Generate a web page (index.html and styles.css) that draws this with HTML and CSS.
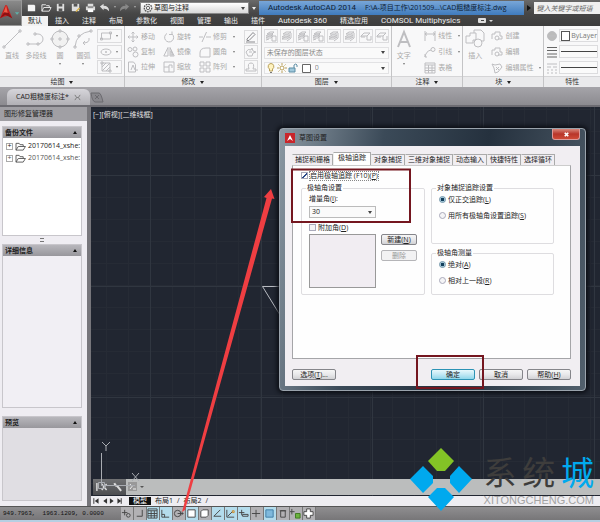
FILE: index.html
```html
<!DOCTYPE html>
<html lang="zh-CN">
  <head>
    <meta charset="UTF-8" />
    <meta name="viewport" content="width=device-width, initial-scale=1.0" />
    <title>Autodesk AutoCAD 2014</title>
    <link rel="stylesheet" href="styles.css" />
  </head>
  <body>
    <svg class="sprite" aria-hidden="true">
      <symbol id="move" viewBox="0 0 12 12"><path d="M6 1v10M1 6h10M4.500 2.500L6 1l1.500 1.500M4.500 9.500L6 11l1.500-1.500M2.500 4.500L1 6l1.500 1.500M9.500 4.500L11 6 9.500 7.500" /></symbol>
      <symbol id="rotate" viewBox="0 0 12 12"><path d="M4 2.500a4.500 4.500 0 1 0 5 .5M9 .5V3.500H6" /></symbol>
      <symbol id="trim" viewBox="0 0 12 12"><path d="M0 6h4M7 6h5M3 11L7.500 1" /></symbol>
      <symbol id="copy" viewBox="0 0 12 12"><circle cx="3" cy="3.500" r="2" /><circle cx="8" cy="3" r="2" /><circle cx="8.500" cy="8.500" r="2.500" /></symbol>
      <symbol id="mirror" viewBox="0 0 12 12"><path d="M5 1.500V10H.8zM7 1.500V10h4.200z" /><path d="M8 5v4h2z" /></symbol>
      <symbol id="fillet" viewBox="0 0 12 12"><path d="M1 11V7q0-5 6-5h4v9z" /></symbol>
      <symbol id="stretch" viewBox="0 0 12 12"><path d="M1.500 1h5l2 2.500V11h-7zM4 9l2-5 2 5M8 9h3" /></symbol>
      <symbol id="scale" viewBox="0 0 12 12"><path d="M1 1h10v10H1zM1 6h5v5M6 6V4h3v3" /></symbol>
      <symbol id="array" viewBox="0 0 12 12"><path d="M1 1h4v4H1zM7 1h4v4H7zM1 7h4v4H1zM7 7h4v4H7z" /></symbol>
      <symbol id="pencil" viewBox="0 0 12 12"><path d="M2 8l6-6.500 2 2L4 9.500H2zM1 11h9" stroke="#8a8a8e" /></symbol>
      <symbol id="explode" viewBox="0 0 12 12"><path d="M1 6q2-4 5-2l1-2 1 3 3 1-3 1-1 3H3zM4 6h3" /></symbol>
      <symbol id="offset" viewBox="0 0 12 12"><path d="M1 10h10V8H8q2-6-2-6T4 8H1z" /></symbol>
      <symbol id="rect" viewBox="0 0 12 12"><path d="M1.500 3h9v6h-9zM.5 8h2v2h-2zM9.500 2h2v2h-2z" /></symbol>
      <symbol id="ellipse" viewBox="0 0 12 12"><ellipse cx="6" cy="6" rx="5" ry="3" /><path d="M6 5v2M5 6h2" /></symbol>
      <symbol id="hatch" viewBox="0 0 12 12"><path d="M2 2h8v8H2zM2 6l4-4M2 10l8-8M6 10l4-4M1 1h2v2H1zM9 9h2v2H9z" /></symbol>
      <symbol id="layers" viewBox="0 0 12 12"><path d="M1 8l3-2h4L6 8zM1 6l3-2h4L6 6zM2 4l3-2h4L7 4zM1 10l3-1M7 6h4v5H7z" /></symbol>
      <symbol id="layer2" viewBox="0 0 12 12"><path d="M1 9l3-2h5L6 9zM1 7l3-2h5L6 7zM2 4l3-2h5L7 4zM10 3v5M6 11l4-3" /></symbol>
      <symbol id="layer3" viewBox="0 0 12 12"><path d="M1 6l3-3h6L7 6zM7 6v4h4V6M1 6v1h4" /></symbol>
      <symbol id="linear" viewBox="0 0 12 12"><path d="M1 1v10M11 1v10M1 4h10M3 2.500L1 4l2 1.500M9 2.500L11 4 9 5.500" /></symbol>
      <symbol id="leader" viewBox="0 0 12 12"><circle cx="9" cy="3.500" r="2" /><path d="M1 11q1-6 6-7M1 8v3h2" /></symbol>
      <symbol id="table" viewBox="0 0 12 12"><path d="M1 1h10v10H1zM1 3h10M1 6h10M1 8.500h10M4.500 3v8M8 3v8" /></symbol>
      <symbol id="block" viewBox="0 0 12 12"><path d="M1 9V4h3V2h5v4h2v3H7" /><circle cx="6" cy="8" r="2" /></symbol>
      <symbol id="tag" viewBox="0 0 12 12"><path d="M1 2l3 1 5-1 2 3-4 5-3 1-1-5zM5 5l3 3M8 5L5 8" /></symbol>
      <symbol id="folder" viewBox="0 0 12 10"><path d="M1 9V1.500h3.500L5.500 3H9v2M1 9l2.500-4H11.500L9 9z" /></symbol>
    </svg>

    <div class="app">
      <header class="top">
        <button class="app-logo" aria-label="AutoCAD">
          <svg viewBox="0 0 24 24"><path d="M0 18L6 3h2l6 15-4-3-5 1z" fill="#c31d1d" /><path d="M7 3l-3 9 5 1z" fill="#f05b45" /><path d="M0 18l6-4 8 4-4-6-5-1z" fill="#8c1013" /><path d="M17 11h5l-2.500 3z" fill="#5fb0a8" /></svg>
        </button>
        <div class="top__rows">
          <div class="titlebar">
            <div class="quick">
              <button aria-label="新建"><svg viewBox="0 0 12 12"><path d="M2 3h7l1 1v6H2z" fill="#f4f4f4" /></svg></button>
              <button aria-label="打开"><svg viewBox="0 0 12 12"><path d="M1 10V3h4l1 1h3v2M1 10l2-4h8l-2 4z" fill="none" stroke="#eee" /></svg></button>
              <button aria-label="保存"><svg viewBox="0 0 12 12"><path d="M2 2h8v8H2z" fill="#ddd" /><path d="M4 2h4v3H4zM4 7h4v3H4z" fill="#555" /></svg></button>
              <button aria-label="另存为"><svg viewBox="0 0 12 12"><path d="M2 2h8v8H2z" fill="#ddd" /><path d="M4 2h4v3H4z" fill="#555" /><path d="M6 10l4-4 1 1-4 4z" fill="#d9b040" /></svg></button>
              <button aria-label="打印"><svg viewBox="0 0 12 12"><path d="M3 2h6v3h2v4H1V5h2z" fill="#ddd" /><path d="M3 5h6v1H3z" fill="#444" /><path d="M3 8h6v3H3z" fill="#fff" /></svg></button>
              <button aria-label="放弃"><svg viewBox="0 0 12 12"><path d="M1 5l4-3v2q6 0 6 6-2-3-6-3v2z" fill="#ddd" /></svg></button>
              <i class="caret caret--light"></i>
              <button aria-label="重做"><svg viewBox="0 0 12 12"><path d="M11 5L7 2v2Q1 4 1 10q2-3 6-3v2z" fill="#888" /></svg></button>
              <i class="caret caret--light"></i>
            </div>
            <div class="combo combo--workspace">
              <svg viewBox="0 0 12 12"><circle cx="6" cy="6" r="4.500" fill="none" stroke="#555" stroke-width="1.500" stroke-dasharray="2 1" /><circle cx="6" cy="6" r="2" fill="none" stroke="#555" /></svg>
              <select aria-label="工作空间"><option>草图与注释</option></select>
            </div>
            <button class="quick-more" aria-label="自定义"><i class="caret"></i></button>
            <div class="window-title"><span>Autodesk AutoCAD 2014</span><span class="window-title__path">F:\A-项目工作\201509...\CAD粗糙度标注.dwg</span></div>
            <i class="play"></i>
            <input class="search" type="text" aria-label="搜索" placeholder="键入关键字或短语" />
          </div>
          <nav class="tabs">
            <button class="tabs__item tabs__item--active">默认</button>
            <button class="tabs__item">插入</button>
            <button class="tabs__item">注释</button>
            <button class="tabs__item">布局</button>
            <button class="tabs__item">参数化</button>
            <button class="tabs__item">视图</button>
            <button class="tabs__item">管理</button>
            <button class="tabs__item">输出</button>
            <button class="tabs__item">插件</button>
            <button class="tabs__item tabs__item--latin">Autodesk 360</button>
            <button class="tabs__item">精选应用</button>
            <button class="tabs__item tabs__item--latin">COMSOL Multiphysics</button>
            <button class="tabs__toggle" aria-label="最小化"><svg viewBox="0 0 16 8"><rect x="0" y="1" width="8" height="5" rx="1" fill="#ddd" /><path d="M3 3h3v1H3z" fill="#444" /><path d="M11 3h4l-2 2z" fill="#ddd" /></svg></button>
          </nav>
        </div>
      </header>

      <section class="ribbon">
        <div class="panel panel--draw">
          <div class="panel__body">
            <button class="big"><svg viewBox="0 0 20 20"><path d="M2 18L18 2M1 17h2v2H1zM17 1h2v2h-2z" /></svg>直线</button>
            <button class="big"><svg viewBox="0 0 20 20"><path d="M2 15h10a5 5 0 0 0 0-10H9M1 14h2v2H1zM11 14h2v2h-2zM8 4h2v2H8z" /></svg>多段线</button>
            <button class="big"><svg viewBox="0 0 20 20"><circle cx="10" cy="10" r="8" fill="#f1f1f1" /><path d="M9 1h2v2H9zM9 17h2v2H9zM9 9h2v2H9zM1 9h2v2H1zM17 9h2v2h-2z" /></svg>圆<i class="caret"></i></button>
            <button class="big"><svg viewBox="0 0 20 20"><path d="M2 18Q3 4 18 2M1 17h2v2H1zM17 1h2v2h-2zM5 6h2v2H5zM16 9q1 5-6 5M12 12l-2 2 2 2" /></svg>圆弧<i class="caret"></i></button>
            <div class="stack">
              <button class="split" aria-label="矩形"><svg><use href="#rect" /></svg><i class="caret"></i></button>
              <button class="split" aria-label="椭圆"><svg><use href="#ellipse" /></svg><i class="caret"></i></button>
              <button class="split" aria-label="图案填充"><svg><use href="#hatch" /></svg><i class="caret"></i></button>
            </div>
          </div>
          <h2 class="panel__title">绘图<i class="caret"></i></h2>
        </div>

        <div class="panel panel--modify">
          <div class="panel__body panel__body--grid">
            <button class="tool"><svg><use href="#move" /></svg>移动</button>
            <button class="tool"><svg><use href="#rotate" /></svg>旋转</button>
            <button class="tool"><svg><use href="#trim" /></svg>修剪<i class="caret"></i></button>
            <button class="boxed" aria-label="删除"><svg><use href="#pencil" /></svg></button>
            <button class="tool"><svg><use href="#copy" /></svg>复制</button>
            <button class="tool"><svg><use href="#mirror" /></svg>镜像</button>
            <button class="tool"><svg><use href="#fillet" /></svg>圆角<i class="caret"></i></button>
            <button class="boxed" aria-label="分解"><svg><use href="#explode" /></svg></button>
            <button class="tool"><svg><use href="#stretch" /></svg>拉伸</button>
            <button class="tool"><svg><use href="#scale" /></svg>缩放</button>
            <button class="tool"><svg><use href="#array" /></svg>阵列<i class="caret"></i></button>
            <button class="boxed" aria-label="偏移"><svg><use href="#offset" /></svg></button>
          </div>
          <h2 class="panel__title">修改<i class="caret"></i></h2>
        </div>

        <div class="panel panel--layers">
          <div class="panel__body panel__body--rows">
            <div class="layer-tools">
              <button class="boxed" aria-label="图层特性"><svg><use href="#layers" /></svg></button>
              <button class="boxed" aria-label="匹配"><svg><use href="#layer2" /></svg></button>
              <button class="boxed" aria-label="上一个"><svg><use href="#layers" /></svg></button>
              <button class="boxed" aria-label="隔离"><svg><use href="#layers" /></svg></button>
              <button class="boxed" aria-label="取消隔离"><svg><use href="#layer2" /></svg></button>
              <button class="boxed" aria-label="冻结"><svg><use href="#layer2" /></svg></button>
              <button class="boxed" aria-label="关闭"><svg><use href="#layer3" /></svg></button>
              <button class="boxed" aria-label="锁定"><svg><use href="#layer3" /></svg></button>
            </div>
            <div class="combo"><select aria-label="图层状态"><option>未保存的图层状态</option></select></div>
            <div class="combo">
              <svg class="layer-flags" viewBox="0 0 48 12">
                <path d="M6 1.500a3 3 0 0 1 1.500 5.500v2h-3V7A3 3 0 0 1 6 1.500z" fill="#fff3c0" stroke="#b9a05a" /><path d="M5 10.500h2" stroke="#777" />
                <circle cx="17" cy="6" r="2" fill="#fff" stroke="#b9a05a" /><path d="M17 1v2M17 9v2M12 6h2M20 6h2M13.500 2.500l1 1M20.500 2.500l-1 1M13.500 9.500l1-1M20.500 9.500l-1-1" stroke="#b9a05a" />
                <path d="M24 6h6v4h-6z" fill="#9fc8dc" stroke="#5d8da5" /><path d="M29 6V3q2-2 3 0v2" fill="none" stroke="#5d8da5" />
                <path d="M37.500 2.500h8v8h-8z" fill="#fff" stroke="#666" />
              </svg>
              <select aria-label="图层"><option>0</option></select>
            </div>
          </div>
          <h2 class="panel__title">图层<i class="caret"></i></h2>
        </div>

        <div class="panel panel--note">
          <div class="panel__body">
            <button class="big"><svg viewBox="0 0 20 20"><path d="M4 18L10 3l6 15M6 13h8" stroke-width="2" /></svg>文字<i class="caret"></i></button>
            <div class="stack">
              <button class="tool"><svg><use href="#linear" /></svg>线性<i class="caret"></i></button>
              <button class="tool"><svg><use href="#leader" /></svg>引线<i class="caret"></i></button>
              <button class="tool"><svg><use href="#table" /></svg>表格</button>
            </div>
          </div>
          <h2 class="panel__title">注释<i class="caret"></i></h2>
        </div>

        <div class="panel panel--block">
          <div class="panel__body">
            <button class="big"><svg viewBox="0 0 20 20"><path d="M1 14V7h4V4h6v7H8v3zM9 4V1h7l3 3v8h-3" /><circle cx="13" cy="14" r="4" /></svg>插入</button>
            <div class="stack">
              <button class="tool"><svg><use href="#block" /></svg>创建</button>
              <button class="tool"><svg><use href="#block" /></svg>编辑</button>
              <button class="tool"><svg><use href="#tag" /></svg>编辑属性<i class="caret"></i></button>
            </div>
          </div>
          <h2 class="panel__title">块<i class="caret"></i></h2>
        </div>

        <div class="panel panel--props">
          <div class="panel__body panel__body--rows">
            <div class="prop"><svg viewBox="0 0 12 12"><circle cx="6" cy="6" r="4.500" fill="#bbb" /><path d="M2 6h8" /></svg><button class="prop__value"><i class="swatch"></i>ByLayer</button></div>
            <div class="prop"><svg viewBox="0 0 12 12"><path d="M1 1.500h10M1 4.500h10M1 8h10M1 11h10" stroke="#666" /></svg><button class="prop__value" aria-label="线宽"><i class="rule"></i></button></div>
            <div class="prop"><svg viewBox="0 0 12 12"><path d="M1 2h10M1 5h4M7 5h4M1 8h2M5 8h2M9 8h2M2 10v2M6 10v2M10 10v2" /></svg><button class="prop__value" aria-label="线型"><i class="rule"></i></button></div>
          </div>
          <h2 class="panel__title">特性</h2>
        </div>
      </section>

      <div class="docs">
        <button class="docs__tab">CAD粗糙度标注*<svg viewBox="0 0 8 8"><path d="M1 1l2 3-2 3M7 1L5 4l2 3M3 4h2" fill="none" stroke="#777" /></svg></button>
        <button class="docs__new" aria-label="新图形"><svg viewBox="0 0 16 12"><path d="M1 1h8q2 0 4 9H5q-3-1-4-9z" fill="#89888d" stroke="#6b6a6f" /><path d="M5 3l4 4M9 3L5 7" stroke="#6b6a6f" /></svg></button>
      </div>

      <main class="main">
        <aside class="side">
          <h1 class="side__title">图形修复管理器</h1>
          <div class="side__body">
            <section class="group group--files">
              <h2 class="group__head">备份文件<i class="caret caret--up"></i></h2>
              <ul class="files">
                <li><i class="plus">+</i><svg><use href="#folder" /></svg><span>20170614_xshe:</span></li>
                <li class="files__old"><i class="plus">+</i><svg><use href="#folder" /></svg><span>20170614_xshe:</span></li>
              </ul>
            </section>
            <i class="grip"></i>
            <section class="group group--info">
              <h2 class="group__head">详细信息<i class="caret caret--up"></i></h2>
            </section>
            <i class="grip grip--blank"></i>
            <section class="group group--preview">
              <h2 class="group__head">预览<i class="caret caret--up"></i></h2>
            </section>
          </div>
        </aside>

        <div class="work">
          <div class="canvas">
            <p class="canvas__view">[−][俯视][二维线框]</p>
            <svg class="ucs" viewBox="0 0 50 56"><path d="M8.500 12V44.500H42M5.500 41.500h6v6h-6zM39 32l7 8M46 32l-7 8M9 1l4 4 4-4M13 5v5" /></svg>
            <div class="command">
              <div class="command__tools"><svg viewBox="0 0 34 16"><path d="M4 4v8M9 5l5 6M14 5l-5 6" stroke-width="1.500" /><path d="M22 4q1 3 3 3l4 5" stroke-width="2" /></svg></div>
              <svg class="command__prompt" viewBox="0 0 20 12"><rect x="2" y="1" width="9" height="9" fill="#999" /><path d="M4 3l2 2.500L4 8M7 8h3" fill="none" stroke="#eee" /><path d="M14 5h4l-2 2z" fill="#555" /></svg>
            </div>
          </div>
          <div class="layouts">
            <svg viewBox="0 0 36 10"><path d="M3 2v6M32 2v6" stroke="#333" /><path d="M8 2v6L4 5zM17 2v6l-4-3zM20 2v6l4-3zM28 2v6l4-3z" fill="#333" /></svg>
            <button class="layouts__tab layouts__tab--active">模型</button>
            <button class="layouts__tab">布局1</button><span>/</span>
            <button class="layouts__tab">布局2</button><span>/</span>
          </div>
        </div>
      </main>

      <footer class="status">
        <output class="status__pos">949.7963,  1963.1209, 0.0000</output>
        <div class="status__tools">
          <button aria-label="推断约束"><svg viewBox="0 0 12 12"><path d="M4 2v6M1 5h6" /><circle cx="8" cy="8" r="2" /></svg></button>
          <button aria-label="捕捉"><svg viewBox="0 0 12 12"><path d="M9 2v7H3" /></svg></button>
          <button class="on" aria-label="栅格"><svg><use href="#table" /></svg></button>
          <button class="on" aria-label="正交"><svg viewBox="0 0 12 12"><path d="M2 2v8h8M2 7h3v3" /></svg></button>
          <button aria-label="极轴"><svg viewBox="0 0 12 12"><circle cx="5" cy="6" r="3.500" /><path d="M5 6h6M9 4l2 2-2 2" /></svg></button>
          <button class="on" aria-label="对象捕捉"><svg viewBox="0 0 12 12"><path d="M2 2h8v8H2z" fill="#fff" /></svg></button>
          <button aria-label="三维捕捉"><svg viewBox="0 0 12 12"><path d="M2 4l2-2h6v6l-2 2H2z" fill="#fff" /></svg></button>
          <button class="on" aria-label="追踪"><svg viewBox="0 0 12 12"><path d="M9 2L2 9h8" /></svg></button>
          <button class="on" aria-label="UCS"><svg viewBox="0 0 12 12"><path d="M2 2v8h8M3 9l5-5" /><path d="M8 3h2v2H8z" stroke="#d08a20" /></svg></button>
          <button class="on" aria-label="动态输入"><svg viewBox="0 0 12 12"><path d="M4 2v6M1 5h6M5 7h6v2H5z" /></svg></button>
          <button aria-label="线宽"><svg viewBox="0 0 12 12"><path d="M5.500 2v8M1 6h9" /></svg></button>
          <button class="on" aria-label="透明度"><svg viewBox="0 0 12 12"><path d="M2 2h8v8H2z" fill="#7fb9dc" stroke="#3d7ba3" /></svg></button>
          <button aria-label="快捷特性"><svg viewBox="0 0 12 12"><path d="M4 3h5v7H4zM3 3h7" /></svg></button>
          <button aria-label="选择循环"><svg viewBox="0 0 12 12"><path d="M2 1v6M0 4h5" /><path d="M6 6h5v5H6z" fill="#6cb33f" stroke="#3c7a1e" /></svg></button>
          <button aria-label="注释监视器"><svg viewBox="0 0 12 12"><path d="M4 1h4v3h3v4H8v3H4V8H1V4h3z" fill="#fff" /></svg></button>
        </div>
      </footer>
      <div class="taskbar"></div>

      <svg class="sketch" viewBox="0 0 600 522"><path d="M280 286.500H262.500L280 315" fill="none" stroke="#b9bcc2" /></svg>

      <div class="dialog" role="dialog" aria-labelledby="dialogTitle">
        <div class="dialog__bar">
          <svg viewBox="0 0 10 10"><path d="M0 0h10v10H0z" fill="#c9252b" /><path d="M2 8l3-6 3 6-3-2z" fill="#fff" /></svg>
          <span id="dialogTitle">草图设置</span>
          <button class="dialog__close" aria-label="关闭"><svg viewBox="0 0 8 8"><path d="M2 2l4 4M6 2L2 6" stroke="#fff" stroke-width="2" /></svg></button>
        </div>
        <form class="dialog__body">
          <div class="sheet-tabs">
            <button type="button">捕捉和栅格</button>
            <button type="button" class="sheet-tabs__active">极轴追踪</button>
            <button type="button">对象捕捉</button>
            <button type="button">三维对象捕捉</button>
            <button type="button">动态输入</button>
            <button type="button">快捷特性</button>
            <button type="button">选择循环</button>
          </div>
          <div class="sheet">
            <label class="check check--focus"><input type="checkbox" checked /><span>启用极轴追踪 (F10)(<u>P</u>)</span></label>
            <div class="sheet__cols">
              <fieldset class="box box--angle">
                <legend>极轴角设置</legend>
                <label for="step">增量角(<u>I</u>):</label>
                <div class="combo combo--step"><select id="step"><option>30</option></select></div>
                <label class="check"><input type="checkbox" /><span>附加角(<u>D</u>)</span></label>
                <div class="extra">
                  <div class="extra__list"></div>
                  <div class="extra__buttons">
                    <button type="button" class="btn">新建(<u>N</u>)</button>
                    <button type="button" class="btn" disabled>删除</button>
                  </div>
                </div>
              </fieldset>
              <div class="sheet__right">
                <fieldset class="box box--track">
                  <legend>对象捕捉追踪设置</legend>
                  <label class="check"><input type="radio" name="track" checked /><span>仅正交追踪(<u>L</u>)</span></label>
                  <label class="check"><input type="radio" name="track" /><span>用所有极轴角设置追踪(<u>S</u>)</span></label>
                </fieldset>
                <fieldset class="box">
                  <legend>极轴角测量</legend>
                  <label class="check"><input type="radio" name="measure" checked /><span>绝对(<u>A</u>)</span></label>
                  <label class="check"><input type="radio" name="measure" /><span>相对上一段(<u>R</u>)</span></label>
                </fieldset>
              </div>
            </div>
          </div>
          <div class="dialog__foot">
            <button type="button" class="btn btn--options">选项(<u>T</u>)...</button>
            <button type="button" class="btn btn--ok">确定</button>
            <button type="button" class="btn">取消</button>
            <button type="button" class="btn">帮助(<u>H</u>)</button>
          </div>
        </form>
      </div>

      <svg class="marks" viewBox="0 0 600 522">
        <path d="M292 169.500h118v52.500h-118zM417 356h66v32h-66z" fill="none" stroke="#74161f" stroke-width="2" />
        <path d="M182 512L266.500 198l-2.500-1 7-8 3.500 10-2.500-.5L185 510z" fill="#ef3e42" />
      </svg>

      <div class="watermark">
        <svg viewBox="0 0 62 63"><path d="M31 0l13 13-9 10h-8l-9-10z" fill="#83c326" /><path d="M13 18l10 10v7L13 45 0 31zM49 18l13 13-13 14-9-10v-7zM27 40h8l9 9-13 14-13-14z" fill="#00a9ee" /></svg>
        <div class="watermark__text">
          <p class="watermark__name"><span>系</span><span>统</span><span class="watermark__blue">城</span></p>
          <p class="watermark__url">XITONGCHENG.COM</p>
        </div>
      </div>
    </div>
  </body>
</html>
```
FILE: styles.css
```css
* {
  box-sizing: border-box;
  margin: 0;
  padding: 0;
}
body {
  font-family: "Open Sans", "Noto Sans CJK SC", sans-serif;
  font-size: 7px;
  line-height: 8px;
  color: #222;
}
button,
select,
input {
  font: inherit;
  color: inherit;
  background: none;
  border: none;
}
h1,
h2 {
  font-size: 7px;
  font-weight: normal;
}
svg {
  display: block;
  flex: none;
}
.sprite {
  position: absolute;
  width: 0;
  height: 0;
}
.app {
  position: relative;
  display: flex;
  flex-direction: column;
  min-height: 100vh;
  overflow: hidden;
  background: #8f8e93;
}
.caret {
  flex: none;
  border: 2px solid transparent;
  border-top: 3px solid #333;
  border-bottom: none;
}
.caret--light {
  border-top-color: #aaa;
}
.caret--up {
  border-top: none;
  border-bottom: 3px solid #111;
}

/* title bar and ribbon tabs */
.top {
  display: flex;
  background: linear-gradient(#6a6a6a, #474747 50%, #3c3c3c);
}
.app-logo {
  width: 22px;
  height: 26px;
  background: linear-gradient(#8a8a8a, #555);
  border: 1px solid #999;
  border-left: none;
}
.app-logo svg {
  width: 21px;
  height: 22px;
}
.top__rows {
  flex: 1;
  min-width: 0;
}
.titlebar {
  display: flex;
  align-items: center;
  height: 16px;
}
.quick {
  display: flex;
  align-items: center;
  justify-content: space-between;
  width: 118px;
  padding: 0 4px 2px;
}
.quick svg {
  width: 11px;
  height: 11px;
}
.quick .caret {
  border-width: 2px 1px 0;
}
.combo {
  display: flex;
  align-items: center;
  height: 12px;
  padding-right: 3px;
  border: 1px solid #e2e2e4;
  background: #fafafa;
}
.combo select {
  flex: 1;
  min-width: 0;
  appearance: none;
  outline: none;
}
.combo::after {
  content: "";
  border: 2px solid transparent;
  border-top: 3px solid #444;
  border-bottom: none;
}
.combo--workspace {
  width: 109px;
  padding-left: 2px;
  gap: 1px;
  border-color: #888;
  background: linear-gradient(#fff, #d8d8d8);
}
.combo--workspace svg {
  width: 10px;
  height: 10px;
}
.quick-more {
  width: 10px;
  padding: 4px 3px;
}
.quick-more .caret {
  display: block;
  border-top-color: #eee;
}
.window-title {
  display: flex;
  gap: 9px;
  flex: 266;
  height: 14px;
  padding-left: 9px;
  align-items: center;
  white-space: nowrap;
  font-family: Roboto, "Noto Sans CJK SC", sans-serif;
  font-size: 8px;
  color: #0e1d33;
  background: linear-gradient(#78a6d8, #3f7bbd);
}
.window-title__path {
  font-family: "Open Sans", "Noto Sans CJK SC", sans-serif;
  font-size: 7px;
}
.play {
  margin: 0 3px;
  border: 3px solid transparent;
  border-left: 4px solid #111;
  border-right: none;
}
.search {
  flex: 66;
  min-width: 0;
  height: 12px;
  padding-left: 2px;
  font-style: italic;
  background: #f0f0f0;
}
.search::placeholder {
  color: #666;
}
.tabs {
  display: flex;
  height: 10px;
  color: #eee;
}
.tabs__item {
  padding: 0 6px;
  white-space: nowrap;
  line-height: 10px;
}
.tabs__item--active {
  color: #222;
  background: #f2f2f2;
}
.tabs__item--latin {
  font-family: Roboto, sans-serif;
  font-size: 8px;
}
.tabs__item + .tabs__item {
  margin-left: 1px;
}
.tabs__toggle {
  margin-left: 12px;
}
.tabs__toggle svg {
  width: 16px;
  height: 8px;
}

/* ribbon */
.ribbon {
  display: flex;
  height: 61px;
  background: #f8f8f9;
  color: #aaa;
}
.ribbon svg {
  width: 12px;
  height: 12px;
  fill: none;
  stroke: #bebec1;
}
.panel {
  display: flex;
  flex-direction: column;
  min-width: 0;
  border-right: 1px solid #c4c4c6;
}
.panel--draw {
  flex: 125;
}
.panel--modify {
  flex: 137;
}
.panel--layers {
  flex: 130;
}
.panel--note {
  flex: 71;
}
.panel--block {
  flex: 81;
}
.panel--props {
  flex: 56;
  border-right: none;
}
.panel__body {
  display: flex;
  flex: 1;
  justify-content: space-between;
  padding: 3px 2px 2px;
}
.panel__body--grid {
  display: grid;
  grid-template-columns: 36px 36px 1fr 15px;
  align-items: center;
}
.panel__body--rows {
  flex-direction: column;
  overflow: hidden;
}
.panel__title {
  display: flex;
  justify-content: center;
  align-items: center;
  gap: 5px;
  height: 11px;
  border-top: 1px solid #d5d5d7;
  background: #eaeaec;
  color: #333;
}
.panel .caret {
  border-width: 2px 1px 0;
  border-top-color: #777;
}
.panel__title .caret {
  border-width: 3px 2px 0;
  border-top-color: #222;
}
.big {
  display: flex;
  flex-direction: column;
  align-items: center;
  gap: 3px;
  white-space: nowrap;
}
.ribbon .big svg {
  width: 20px;
  height: 20px;
}
.stack {
  display: flex;
  flex-direction: column;
  justify-content: space-between;
}
.tool {
  display: flex;
  align-items: center;
  gap: 2px;
  height: 13px;
  white-space: nowrap;
}
.tool .caret {
  margin-left: 4px;
}
.split {
  display: flex;
  align-items: center;
  gap: 4px;
  padding: 0 3px 0 2px;
  border: 1px solid #dcdcde;
}
.boxed {
  width: 14px;
  height: 14px;
  border: 1px solid #dcdcde;
}
.layer-tools {
  display: flex;
  justify-content: space-between;
}
.ribbon .layer-flags {
  width: 48px;
  stroke: none;
}
.panel .combo select {
  padding-left: 2px;
  color: #888;
}
.prop {
  display: flex;
  gap: 1px;
  align-items: center;
}
.prop__value {
  display: flex;
  flex: 1;
  gap: 1px;
  align-items: center;
  min-width: 0;
  height: 13px;
  padding-left: 1px;
  border: 1px solid #dcdcde;
  background: #fafafa;
  color: #777;
}
.swatch {
  width: 10px;
  height: 10px;
  border: 1px solid #555;
  background: #fff;
}
.rule {
  flex: 1;
  border-top: 1px solid #444;
}

/* drawing tabs */
.docs {
  display: flex;
  align-items: flex-end;
  height: 20px;
  padding-left: 7px;
  border-bottom: 2px solid #6d6c72;
  background: linear-gradient(#a5a4a9, #8c8b90);
}
.docs__tab {
  display: flex;
  align-items: center;
  gap: 5px;
  height: 16px;
  padding: 0 9px;
  border-radius: 6px 6px 0 0;
  background: linear-gradient(#d6d5da, #b1b0b5);
}
.docs__tab svg {
  width: 7px;
  height: 7px;
}
.docs__new svg {
  width: 16px;
  height: 14px;
}

/* recovery manager */
.main {
  display: flex;
  flex: 1;
}
.side {
  display: flex;
  flex-direction: column;
  width: 91px;
  border-right: 4px solid #77767b;
}
.side__title {
  height: 14px;
  padding: 3px 4px;
  background: #a09fa4;
}
.side__body {
  display: flex;
  flex-direction: column;
  flex: 1;
  padding: 5px 5px 5px 2px;
  background: #efedf2;
}
.group {
  border: 1px solid #c8c6cb;
  background: #f1eff4;
}
.group--files {
  flex: 110;
  background: #fff;
}
.group--info {
  flex: 164;
}
.group--preview {
  flex: 84;
  background: #e0dee3;
}
.group__head {
  display: flex;
  justify-content: space-between;
  align-items: center;
  height: 11px;
  padding: 0 4px 0 2px;
  font-weight: bold;
  background: linear-gradient(#b8b7bc, #98979c);
}
.files {
  padding: 2px 0 0 3px;
  list-style: none;
}
.files li {
  display: flex;
  align-items: center;
  gap: 2px;
  height: 12px;
}
.files svg {
  width: 11px;
  height: 9px;
  fill: none;
  stroke: #555;
}
.files__old {
  color: #555;
}
.plus {
  display: flex;
  flex: none;
  justify-content: center;
  align-items: center;
  width: 7px;
  height: 7px;
  border: 1px solid #aaa;
  font-style: normal;
}
.grip {
  align-self: center;
  width: 4px;
  height: 4px;
  margin: 2px 0;
  border: solid #777;
  border-width: 1px 0;
}
.grip--blank {
  border-color: transparent;
}

/* drawing area */
.work {
  display: flex;
  flex-direction: column;
  flex: 1;
  min-width: 0;
}
.canvas {
  display: flex;
  flex-direction: column;
  flex: 1;
  padding: 4px 0 1px 2px;
  background-color: #212631;
  background-image: linear-gradient(90deg, #303640 1px, transparent 1px),
    linear-gradient(#303640 1px, transparent 1px),
    linear-gradient(90deg, #262b35 1px, transparent 1px),
    linear-gradient(#262b35 1px, transparent 1px);
  background-size: 111px 111px, 111px 111px, 22px 22px, 22px 22px;
  background-position: 59px 68px, 59px 68px, 15px 2px, 15px 2px;
}
.canvas__view {
  color: #e4e4e4;
}
.ucs {
  width: 50px;
  height: 56px;
  margin: auto 0 -18px 0;
  fill: none;
  stroke: #a9acb2;
  z-index: 1;
}
.command {
  display: flex;
  align-items: center;
  height: 16px;
  background: #bbbdbd;
}
.command__tools {
  width: 33px;
  height: 16px;
  background: linear-gradient(#707173, #4c4d50);
}
.command__tools svg {
  width: 33px;
  height: 16px;
  fill: none;
  stroke: #ddd;
}
.command__prompt {
  width: 20px;
  height: 12px;
}
.layouts {
  display: flex;
  align-items: center;
  gap: 4px;
  height: 10px;
  background: #eeedf1;
}
.layouts svg {
  width: 34px;
  height: 10px;
}
.layouts__tab--active {
  padding: 0 4px;
  color: #fff;
  background: #111;
}

/* status bar */
.status {
  display: flex;
  align-items: center;
  height: 14px;
  border-top: 1px solid #555;
  background: linear-gradient(#8f8e90, #777678);
}
.status__pos {
  width: 121px;
  padding-left: 3px;
  font-family: "Liberation Mono", monospace;
  font-size: 6px;
  white-space: pre;
  color: #111;
}
.status__tools {
  display: flex;
}
.status__tools button {
  width: 13px;
  height: 13px;
  border-right: 1px solid #777;
  background: #b2b1b4;
}
.status__tools button.on {
  background: #b4dcec;
}
.status__tools svg {
  width: 11px;
  height: 11px;
  fill: none;
  stroke: #444;
}
.taskbar {
  height: 2px;
  background: #b5cfe2;
}

/* drafting settings dialog */
.sketch,
.marks {
  position: absolute;
  top: 0;
  left: 0;
  width: 600px;
  height: 522px;
  pointer-events: none;
}
.dialog {
  position: absolute;
  top: 128px;
  left: 279px;
  width: 307px;
  padding: 0 5px 4px;
  border: 1px solid #9aa3ac;
  border-radius: 4px;
  background: linear-gradient(100deg, #8b98a3, #3b4a58 30%, #25313e 60%, #52606d);
  box-shadow: 0 0 4px 2px #0b0e14;
}
.dialog__bar {
  display: flex;
  align-items: center;
  gap: 4px;
  height: 17px;
}
.dialog__bar > svg {
  width: 10px;
  height: 10px;
}
.dialog__close {
  align-self: flex-start;
  display: flex;
  justify-content: center;
  align-items: center;
  width: 28px;
  height: 11px;
  margin-left: auto;
  border: 1px solid #d99;
  border-top: none;
  border-radius: 0 0 3px 3px;
  background: linear-gradient(#d8877b, #b8352a 50%, #cf4b38);
}
.dialog__close svg {
  width: 7px;
  height: 7px;
}
.dialog__body {
  padding: 6px 9px 6px 7px;
  background: #f1eef2;
}
.sheet-tabs {
  display: flex;
  align-items: flex-end;
}
.sheet-tabs button {
  height: 11px;
  padding: 0 2px;
  border: 1px solid #aaa;
  border-bottom: none;
  border-left-color: #eee;
  white-space: nowrap;
}
.sheet-tabs .sheet-tabs__active {
  height: 13px;
  padding: 0 4px 2px;
  background: #fff;
}
.sheet {
  height: 194px;
  padding: 5px 16px 0 8px;
  border: 1px solid #a5a5a8;
  border-top-color: #ccc;
  background: #fefefe;
}
.check {
  display: flex;
  align-items: center;
  gap: 2px;
  height: 9px;
  white-space: nowrap;
}
.check input {
  appearance: none;
  flex: none;
  width: 7px;
  height: 7px;
  border: 1px solid #aab;
  background: #f4f4f6;
}
.check input[type="radio"] {
  border-radius: 50%;
}
.check input[type="radio"]:checked {
  border-color: #6d93a8;
  background: radial-gradient(#123f5c 40%, #b5d7e6 60%);
}
.check input[type="checkbox"]:checked {
  background: linear-gradient(135deg, #fff 40%, #2c4a8a 40%, #2c4a8a 60%, #fff 60%);
}
.check--focus span {
  outline: 1px dotted #888;
}
.sheet__cols {
  display: flex;
  justify-content: space-between;
  padding-top: 4px;
}
.box {
  min-width: 0;
  height: 46px;
  padding: 3px 7px 0;
  border: 1px solid #dedde0;
  border-radius: 2px;
}
.box legend {
  padding: 0 1px;
  margin-left: -3px;
}
.box .check + .check {
  margin-top: 7px;
}
.sheet__right {
  width: 123px;
}
.box--track {
  height: 60px;
  margin-bottom: 5px;
}
.box--angle {
  width: 124px;
  height: 111px;
}
.combo--step {
  width: 67px;
  margin: 3px 0 5px;
  padding-left: 2px;
  border-color: #bbb;
}
.extra {
  display: flex;
  justify-content: space-between;
  margin-top: 2px;
}
.extra__list {
  width: 67px;
  height: 54px;
  border: 1px solid #999;
  background: #f1edf2;
}
.extra__buttons {
  display: flex;
  flex-direction: column;
  gap: 5px;
  width: 36px;
}
.btn {
  height: 11px;
  border: 1px solid #85858a;
  border-radius: 2px;
  white-space: nowrap;
  background: linear-gradient(#f6f6f6, #e8e8ea 50%, #d2d2d5);
}
.btn:disabled {
  color: #999;
  border-color: #b5b5b8;
  background: #f2f2f3;
}
.dialog__foot {
  display: flex;
  gap: 4px;
  padding-top: 10px;
}
.dialog__foot .btn {
  width: 44px;
}
.dialog__foot .btn--options {
  margin-right: auto;
}
.dialog__foot .btn--ok {
  border-color: #2c93b5;
  background: linear-gradient(#e8f8fc, #c0e8f4 50%, #8fd6ea);
}

.watermark {
  position: absolute;
  right: 6px;
  bottom: 11px;
  display: flex;
  gap: 12px;
}
.watermark > svg {
  width: 62px;
  height: 63px;
}
.watermark__text {
  padding-top: 4px;
}
.watermark__name {
  display: flex;
  justify-content: space-between;
  font-size: 33px;
  line-height: 42px;
  color: #3e3d3c;
}
.watermark__blue {
  color: #00a9ee;
}
.watermark__url {
  font-family: "Liberation Sans", sans-serif;
  font-size: 11px;
  line-height: 12px;
  color: #a3a3a3;
}
```
